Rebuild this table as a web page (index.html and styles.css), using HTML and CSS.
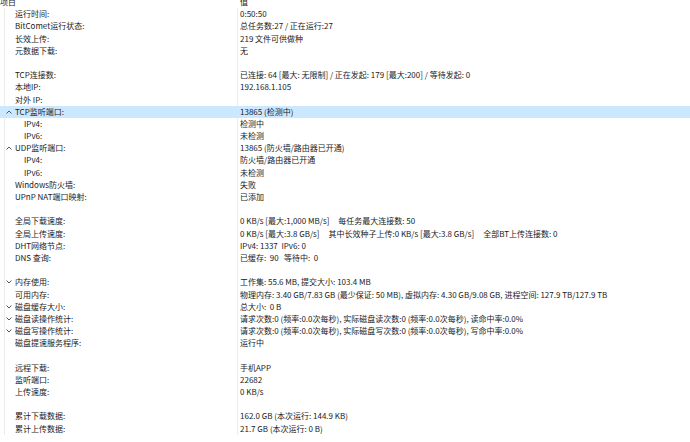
FILE: index.html
```html
<!DOCTYPE html>
<html lang="zh-CN">
<head>
    <meta charset="UTF-8">
    <meta name="viewport" content="width=device-width, initial-scale=1.0">
    <title>BitComet 统计</title>
    <link rel="stylesheet" href="styles.css">
</head>
<body>
    <div class="head">
        <div class="head-key">项目</div>
        <div class="head-val">值</div>
    </div>

    <div class="list">
        <div class="row"><div class="key">运行时间:</div><div class="val">0:50:50</div></div>
        <div class="row"><div class="key">BitComet运行状态:</div><div class="val">总任务数:27 / 正在运行:27</div></div>
        <div class="row"><div class="key">长效上传:</div><div class="val">219 文件可供做种</div></div>
        <div class="row"><div class="key">元数据下载:</div><div class="val">无</div></div>
        <div class="row"><div class="key"></div><div class="val"></div></div>
        <div class="row"><div class="key">TCP连接数:</div><div class="val">已连接: 64 [最大: 无限制] / 正在发起: 179 [最大:200] / 等待发起: 0</div></div>
        <div class="row"><div class="key">本地IP:</div><div class="val">192.168.1.105</div></div>
        <div class="row"><div class="key">对外 IP:</div><div class="val"></div></div>
        <div class="row selected">
            <div class="key"><svg class="chev" width="6" height="4" viewBox="0 0 6 4"><polyline points="0.5,3.5 3,1 5.5,3.5"/></svg>TCP监听端口:</div>
            <div class="val">13865 (检测中)</div>
        </div>
        <div class="row"><div class="key child">IPv4:</div><div class="val">检测中</div></div>
        <div class="row"><div class="key child">IPv6:</div><div class="val">未检测</div></div>
        <div class="row">
            <div class="key"><svg class="chev" width="6" height="4" viewBox="0 0 6 4"><polyline points="0.5,3.5 3,1 5.5,3.5"/></svg>UDP监听端口:</div>
            <div class="val">13865 (防火墙/路由器已开通)</div>
        </div>
        <div class="row"><div class="key child">IPv4:</div><div class="val">防火墙/路由器已开通</div></div>
        <div class="row"><div class="key child">IPv6:</div><div class="val">未检测</div></div>
        <div class="row"><div class="key">Windows防火墙:</div><div class="val">失败</div></div>
        <div class="row"><div class="key">UPnP NAT端口映射:</div><div class="val">已添加</div></div>
        <div class="row"><div class="key"></div><div class="val"></div></div>
        <div class="row"><div class="key">全局下载速度:</div><div class="val">0 KB/s [最大:1,000 MB/s]     每任务最大连接数: 50</div></div>
        <div class="row"><div class="key">全局上传速度:</div><div class="val">0 KB/s [最大:3.8 GB/s]     其中长效种子上传:0 KB/s [最大:3.8 GB/s]     全部BT上传连接数: 0</div></div>
        <div class="row"><div class="key">DHT网络节点:</div><div class="val">IPv4: 1337  IPv6: 0</div></div>
        <div class="row"><div class="key">DNS 查询:</div><div class="val">已缓存:  90   等待中:  0</div></div>
        <div class="row"><div class="key"></div><div class="val"></div></div>
        <div class="row">
            <div class="key"><svg class="chev" width="6" height="4" viewBox="0 0 6 4"><polyline points="0.5,0.5 3,3 5.5,0.5"/></svg>内存使用:</div>
            <div class="val">工作集: 55.6 MB, 提交大小: 103.4 MB</div>
        </div>
        <div class="row"><div class="key">可用内存:</div><div class="val">物理内存: 3.40 GB/7.83 GB (最少保证: 50 MB), 虚拟内存: 4.30 GB/9.08 GB, 进程空间: 127.9 TB/127.9 TB</div></div>
        <div class="row">
            <div class="key"><svg class="chev" width="6" height="4" viewBox="0 0 6 4"><polyline points="0.5,0.5 3,3 5.5,0.5"/></svg>磁盘缓存大小:</div>
            <div class="val">总大小:  0 B</div>
        </div>
        <div class="row">
            <div class="key"><svg class="chev" width="6" height="4" viewBox="0 0 6 4"><polyline points="0.5,0.5 3,3 5.5,0.5"/></svg>磁盘读操作统计:</div>
            <div class="val">请求次数:0 (频率:0.0次每秒), 实际磁盘读次数:0 (频率:0.0次每秒), 读命中率:0.0%</div>
        </div>
        <div class="row">
            <div class="key"><svg class="chev" width="6" height="4" viewBox="0 0 6 4"><polyline points="0.5,0.5 3,3 5.5,0.5"/></svg>磁盘写操作统计:</div>
            <div class="val">请求次数:0 (频率:0.0次每秒), 实际磁盘写次数:0 (频率:0.0次每秒), 写命中率:0.0%</div>
        </div>
        <div class="row"><div class="key">磁盘提速服务程序:</div><div class="val">运行中</div></div>
        <div class="row"><div class="key"></div><div class="val"></div></div>
        <div class="row"><div class="key">远程下载:</div><div class="val">手机APP</div></div>
        <div class="row"><div class="key">监听端口:</div><div class="val">22682</div></div>
        <div class="row"><div class="key">上传速度:</div><div class="val">0 KB/s</div></div>
        <div class="row"><div class="key"></div><div class="val"></div></div>
        <div class="row"><div class="key">累计下载数据:</div><div class="val">162.0 GB (本次运行: 144.9 KB)</div></div>
        <div class="row"><div class="key">累计上传数据:</div><div class="val">21.7 GB (本次运行: 0 B)</div></div>
    </div>
</body>
</html>
```

FILE: styles.css
```css
* {
    margin: 0;
    padding: 0;
    box-sizing: border-box;
}

body {
    background-color: white;
    color: #1a1a1a;
    font-family: "Noto Sans CJK SC", "Noto Sans", sans-serif;
    font-size: 8px;
    overflow: hidden;
}

.head {
    display: grid;
    grid-template-columns: 240px 1fr;
    height: 12.2px;
    line-height: 12.2px;
    margin-top: -4px;
}

.list {
    display: flex;
    flex-direction: column;
}

.row {
    display: grid;
    grid-template-columns: 233px 1fr;
    height: 12.2px;
    line-height: 12.2px;
    padding-left: 4px;
    white-space: pre;
}

.row.selected {
    background-color: #cce8ff;
}

.key {
    display: flex;
    align-items: center;
    border-left: 1px solid #ececec;
    padding-left: 10px;
    position: relative;
}

.key.child {
    padding-left: 19px;
}

.val {
    border-left: 1px solid #ececec;
    padding-left: 2px;
    overflow: hidden;
}

.selected .key,
.selected .val {
    border-left-color: transparent;
}

.chev {
    margin-left: -9px;
    margin-right: 3px;
    fill: none;
    stroke: #444;
    stroke-width: 0.9;
}
```
